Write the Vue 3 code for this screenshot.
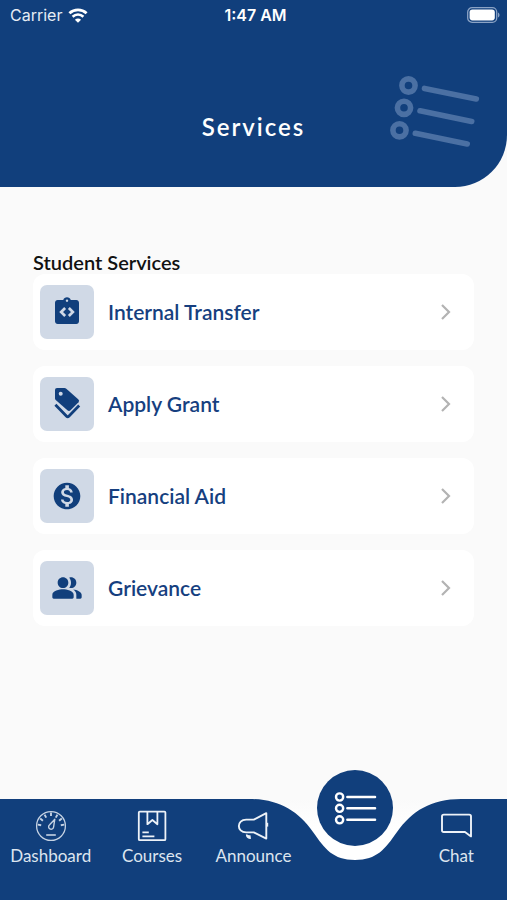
<script setup>
const services = [
  { id: 'transfer', label: 'Internal Transfer' },
  { id: 'grant', label: 'Apply Grant' },
  { id: 'aid', label: 'Financial Aid' },
  { id: 'grievance', label: 'Grievance' },
]
</script>

<template>
  <div class="screen">
    <header class="header">
      <div class="status">
        <div class="carrier">
          <span>Carrier</span>
          <svg class="wifi" viewBox="0 0 20 15" aria-hidden="true">
            <path d="M1.4 5.2C6.3.7 13.7.7 18.6 5.2" fill="none" stroke="#fff" stroke-width="2.8" />
            <path d="M4.6 8.7C7.7 5.8 12.3 5.8 15.4 8.7" fill="none" stroke="#fff" stroke-width="2.6" />
            <path d="M10 14.8 6.9 11.7C8.6 10.1 11.4 10.1 13.1 11.7Z" fill="#fff" />
          </svg>
        </div>
        <span class="time">1:47 AM</span>
        <svg class="battery" viewBox="0 0 34 16" aria-hidden="true">
          <rect x="0.7" y="0.7" width="29" height="14.6" rx="4.4" fill="none" stroke="#8ba3c5" stroke-width="1.3" />
          <rect x="2.6" y="2.6" width="25.2" height="10.8" rx="2.8" fill="#fff" />
          <path d="M31 5.5C33 6.3 33 9.7 31 10.5Z" fill="#8ba3c5" />
        </svg>
      </div>
      <div class="banner">
        <h1>Services</h1>
        <svg class="mark" viewBox="0 0 92 76" aria-hidden="true">
          <g fill="none" stroke="#4b70a3" stroke-width="5.6" stroke-linecap="round">
            <circle cx="20.5" cy="11.5" r="6.6" />
            <circle cx="16" cy="33.8" r="6.6" />
            <circle cx="11.5" cy="56.3" r="6.6" />
            <path d="M36.5 14.4 88.3 25M32 36.8 83.7 47.5M27.3 59.3 79.2 70" />
          </g>
        </svg>
      </div>
    </header>

    <main class="content">
      <h2>Student Services</h2>
      <ul class="list">
        <li v-for="s in services" :key="s.id">
          <button type="button" class="card">
            <span class="tile">
              <svg v-if="s.id === 'transfer'" viewBox="0 0 24 24" aria-hidden="true">
                <path fill="#113f7c" d="M19 3h-4.18C14.4 1.84 13.3 1 12 1s-2.4.84-2.82 2H5c-1.1 0-2 .9-2 2v14c0 1.1.9 2 2 2h14c1.1 0 2-.9 2-2V5c0-1.1-.9-2-2-2z" />
                <circle cx="12" cy="3.5" r="0.9" fill="#d0d9e6" />
                <path d="M10.6 9 7.6 12l3 3M13.4 9l3 3-3 3" fill="none" stroke="#d0d9e6" stroke-width="2" />
              </svg>
              <svg v-else-if="s.id === 'grant'" viewBox="0 0 32 32" aria-hidden="true">
                <path fill="#113f7c" d="M6 0H13.5Q14.5 0 15.3.7L27.2 11.2Q28.9 12.8 27.5 14.3L19.5 22.3Q18 23.7 16.4 22.3L4.7 12Q4 11.3 4 10.4V2Q4 0 6 0Z" />
                <circle cx="9.7" cy="5.8" r="2" fill="#d0d9e6" />
                <path d="M4.4 16.8 15.6 28.2Q16.7 29.3 17.8 28.2L28.2 17.6" fill="none" stroke="#113f7c" stroke-width="2.8" />
              </svg>
              <svg v-else-if="s.id === 'aid'" viewBox="0 0 24 24" aria-hidden="true">
                <path fill="#113f7c" d="M12 2C6.48 2 2 6.48 2 12s4.48 10 10 10 10-4.48 10-10S17.52 2 12 2zm1.41 16.09V20h-2.67v-1.93c-1.71-.36-3.16-1.46-3.27-3.4h1.96c.1 1.05.82 1.87 2.65 1.87 1.96 0 2.4-.98 2.4-1.59 0-.83-.44-1.61-2.67-2.14-2.48-.6-4.18-1.62-4.18-3.67 0-1.72 1.39-2.84 3.11-3.21V4h2.67v1.95c1.86.45 2.79 1.86 2.85 3.39H14.3c-.05-1.11-.64-1.87-2.22-1.87-1.5 0-2.4.68-2.4 1.64 0 .84.65 1.39 2.67 1.91s4.18 1.39 4.18 3.91c-.02 1.83-1.39 2.83-3.13 3.16z" />
              </svg>
              <svg v-else viewBox="0 0 24 24" aria-hidden="true">
                <path fill="#113f7c" d="M16.67 13.13C18.04 14.06 19 15.32 19 17v3h3c.55 0 1-.45 1-1v-2c0-2.18-3.57-3.47-6.33-3.87zM15 12c2.21 0 4-1.79 4-4s-1.79-4-4-4c-.47 0-.91.1-1.33.24C14.5 5.27 15 6.58 15 8s-.5 2.73-1.33 3.76c.42.14.86.24 1.33.24zM9 12c2.21 0 4-1.79 4-4s-1.79-4-4-4-4 1.79-4 4 1.79 4 4 4zm0 1c-2.67 0-8 1.34-8 4v2c0 .55.45 1 1 1h14c.55 0 1-.45 1-1v-2c0-2.66-5.33-4-8-4z" />
              </svg>
            </span>
            <span class="label">{{ s.label }}</span>
            <svg class="chevron" viewBox="0 0 12 18" aria-hidden="true">
              <path d="M2 2 9 9 2 16" fill="none" stroke="#b3b3b3" stroke-width="2.2" />
            </svg>
          </button>
        </li>
      </ul>
    </main>

    <nav class="tabs">
      <svg class="notch" viewBox="0 0 212 61" aria-hidden="true">
        <defs>
          <linearGradient id="notch-fill" x1="0" y1="0" x2="0" y2="1">
            <stop offset="0" stop-color="#fafafa" />
            <stop offset="0.5" stop-color="#ffffff" />
          </linearGradient>
        </defs>
        <path fill="url(#notch-fill)" d="M0 0C30 0 49 12 64 33C76 50 84 61 106 61S136 50 148 33C163 12 182 0 212 0Z" />
      </svg>
      <a href="#dashboard" class="tab">
        <svg viewBox="0 0 32 32" aria-hidden="true">
          <g fill="none" stroke="#c5d2e3">
            <circle cx="16" cy="16" r="14.4" stroke-width="1.3" />
            <path d="M16 2.5V6M9.6 4.6 11.2 7.6M22.4 4.6 20.8 7.6M5.2 8.6 7.9 10.8M26.8 8.6 24.1 10.8M2.8 14.6 6.2 15.2M29.2 14.6 25.8 15.2" stroke-width="1.9" />
            <path d="M19.8 9.2 18.6 17A2.5 2.5 0 1 1 14.6 14.8Z" stroke-width="1.4" stroke-linejoin="round" />
            <path d="M11.2 25H20.8" stroke-width="1.6" />
          </g>
        </svg>
        <span>Dashboard</span>
      </a>
      <a href="#courses" class="tab">
        <svg viewBox="0 0 32 32" aria-hidden="true">
          <g fill="none" stroke="#edf2f8" stroke-width="1.8" stroke-linejoin="round">
            <rect x="2.8" y="1.6" width="26.6" height="28.6" rx="1" />
            <path d="M11.4 2V14.2L16.4 10 21.4 14.2V2" />
            <path d="M6.4 22.4H12.8M6.4 26.4H18.4" />
          </g>
        </svg>
        <span>Courses</span>
      </a>
      <a href="#announce" class="tab">
        <svg viewBox="0 0 32 32" aria-hidden="true">
          <g fill="none" stroke="#edf2f8" stroke-width="1.9" stroke-linejoin="round">
            <path d="M29.3 3.2V28.6L16.8 22.4H9.2C-.6 22.4-.6 9.6 9.2 9.6H16.8Z" />
            <path d="M9.6 24.4V25Q9.6 27.4 13.2 28.4L12.8 25.4" fill="#edf2f8" stroke-width="1.4" />
            <path d="M30.4 12.8V16.6" stroke-width="1.6" />
          </g>
        </svg>
        <span>Announce</span>
      </a>
      <a href="#services" class="tab active" aria-label="Services" aria-current="page">
        <svg viewBox="0 0 76 76" aria-hidden="true">
          <circle cx="38" cy="38" r="38" fill="#113f7c" />
          <g fill="none" stroke="#fff">
            <circle cx="22.6" cy="27" r="3.6" stroke-width="2.4" />
            <circle cx="22.6" cy="38.3" r="3.6" stroke-width="2.4" />
            <circle cx="22.6" cy="49.8" r="3.6" stroke-width="2.4" />
            <path d="M30.4 27H58M30.4 38.3H58M30.4 49.8H58" stroke-width="2.6" stroke-linecap="round" />
          </g>
        </svg>
      </a>
      <a href="#chat" class="tab">
        <svg viewBox="0 0 32 32" aria-hidden="true">
          <path d="M3.8 4.6H29.2Q31 4.6 31 6.4V26.4L25 22H3.8Q2 22 2 20.2V6.4Q2 4.6 3.8 4.6Z" fill="none" stroke="#edf2f8" stroke-width="1.9" stroke-linejoin="round" />
        </svg>
        <span>Chat</span>
      </a>
    </nav>
  </div>
</template>

<style>
body {
  background: #fafafa;
}
</style>

<style scoped>
.screen {
  display: flex;
  flex-direction: column;
  min-height: 100vh;
  background: #fafafa;
  font-family: Lato, "Liberation Sans", sans-serif;
}

.header {
  background: #113f7c;
  color: #fff;
  border-bottom-right-radius: 52px;
}

.status {
  display: grid;
  grid-template-columns: 1fr auto 1fr;
  align-items: center;
  height: 30px;
  padding: 0 6px 0 10px;
  font-family: Inter, "Liberation Sans", sans-serif;
  font-size: 16px;
}

.carrier {
  display: flex;
  align-items: center;
  gap: 6px;
  color: #e6ecf4;
}

.wifi {
  width: 20px;
  height: 15px;
}

.time {
  font-weight: 600;
}

.battery {
  justify-self: end;
  width: 34px;
  height: 16px;
}

.banner {
  display: grid;
  grid-template-columns: 1fr auto 1fr;
  align-items: end;
  padding: 44px 27px 37px;
}

h1 {
  grid-column: 2;
  margin: 0 0 8px;
  font-size: 24px;
  line-height: 30px;
  font-weight: 600;
  letter-spacing: 2px;
}

.mark {
  justify-self: end;
  width: 92px;
  height: 76px;
}

.content {
  flex: 1;
  padding: 63px 33px 48px;
}

h2 {
  margin: 0;
  font-size: 20px;
  line-height: 24px;
  font-weight: 600;
  color: #111;
}

.list {
  display: flex;
  flex-direction: column;
  gap: 16px;
  margin: 0;
  padding: 0;
  list-style: none;
}

.card {
  display: flex;
  align-items: center;
  gap: 14px;
  width: 100%;
  padding: 11px 22px 11px 7px;
  border: 0;
  border-radius: 12px;
  background: #fff;
  color: #163f7f;
  font-family: inherit;
  font-size: 21px;
  line-height: 24px;
  font-weight: 600;
  text-align: left;
  cursor: pointer;
}

.tile {
  display: grid;
  place-items: center;
  width: 54px;
  height: 54px;
  border-radius: 7px;
  background: #d0d9e6;
}

.tile svg {
  width: 32px;
  height: 32px;
}

.label {
  flex: 1;
}

.chevron {
  width: 12px;
  height: 18px;
}

.tabs {
  position: relative;
  display: grid;
  grid-template-columns: repeat(5, 1fr);
  height: 101px;
  background: #113f7c;
}

/* The dip sits under the fourth of five equal tabs. */
.notch {
  position: absolute;
  top: 0;
  left: 70%;
  width: 212px;
  height: 61px;
  transform: translateX(-50%);
}

.tab {
  position: relative;
  display: flex;
  flex-direction: column;
  align-items: center;
  gap: 4px;
  padding-top: 11px;
  color: #dde5ef;
  font-size: 17px;
  line-height: 20px;
  text-decoration: none;
}

.tab svg {
  width: 32px;
  height: 32px;
}

.tab.active {
  margin-top: -29px;
  padding-top: 0;
}

.tab.active svg {
  width: 76px;
  height: 76px;
}
</style>
